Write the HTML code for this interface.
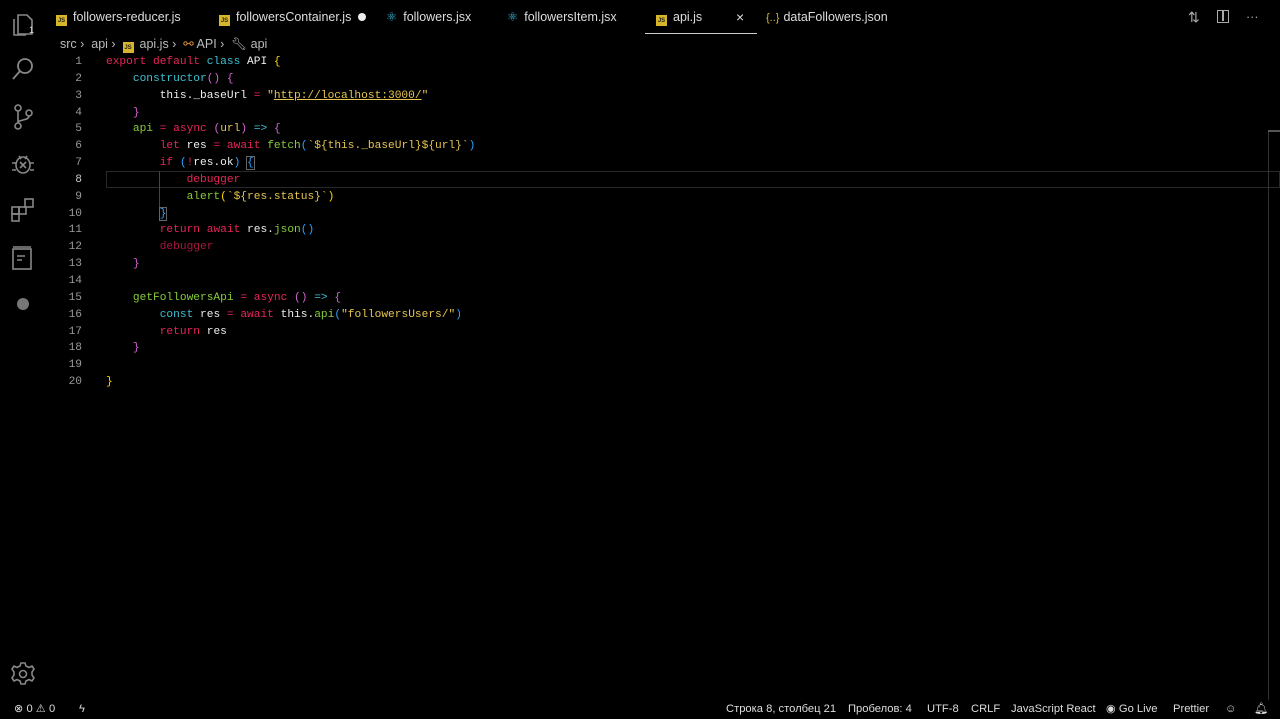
<!DOCTYPE html>
<html><head><meta charset="utf-8"><style>
*{margin:0;padding:0;box-sizing:border-box}
body{width:1280px;height:719px;background:#000;overflow:hidden;position:relative;font-family:"Liberation Sans",sans-serif;color:#ccc}
.act{position:absolute;left:0;top:0;width:45px;height:700px}
.act svg{position:absolute;left:10px}
.tab{position:absolute;top:0;height:34px;line-height:34px;font-size:12.5px;color:#ddd;white-space:nowrap}
.js{display:inline-block;width:11px;height:11px;background:#d8b629;color:#222;font-size:6px;line-height:13px;text-align:center;font-weight:bold;vertical-align:-1px;margin-right:6px}
.bc{position:absolute;top:35px;left:60px;font-size:12.5px;color:#bbb;line-height:18px;white-space:nowrap}
.ln{position:absolute;left:52px;width:30px;text-align:right;font-family:"Liberation Mono",monospace;font-size:11.2px;color:#999}
.code{position:absolute;left:106px;font-family:"Liberation Mono",monospace;font-size:11.2px;color:#eee;white-space:pre}
.k{color:#e8245a}.c{color:#3ec1d3}.g{color:#88cc3a}.s{color:#e6c550}.y{color:#ffd700}.p{color:#d363d3}.b{color:#2aa3ff}.d{color:#a8183f}
.status{position:absolute;top:700px;left:0;width:1280px;height:19px;font-size:11.2px;color:#ddd;line-height:19px}
.status span{position:absolute;white-space:nowrap}
</style></head><body>
<div class="act">
<svg style="top:10px" width="26" height="28" viewBox="0 0 26 28" fill="none" stroke="#888" stroke-width="1.6"><path d="M8 5h9l5 5v14H8z M4 9v16h12"/></svg>
<span style="position:absolute;left:29px;top:25px;font-size:9px;color:#ddd">1</span>
<svg style="top:56px" width="26" height="26" viewBox="0 0 26 26" fill="none" stroke="#888" stroke-width="1.8"><circle cx="15" cy="10" r="7"/><path d="M10 15L3 23"/></svg>
<svg style="top:103px" width="26" height="28" viewBox="0 0 26 28" fill="none" stroke="#888" stroke-width="1.6"><circle cx="8" cy="5" r="3"/><circle cx="8" cy="23" r="3"/><circle cx="19" cy="10" r="3"/><path d="M8 8v12M19 13c0 5-11 3-11 7"/></svg>
<svg style="top:150px" width="26" height="26" viewBox="0 0 26 26" fill="none" stroke="#888" stroke-width="1.6"><ellipse cx="13" cy="15" rx="7" ry="8"/><path d="M9 6l2 3M17 6l-2 3M2 13h4M20 13h4M2 20h4M20 20h4M10 12l6 6M16 12l-6 6"/></svg>
<svg style="top:197px" width="26" height="26" viewBox="0 0 26 26" fill="none" stroke="#888" stroke-width="1.6"><rect x="2" y="10" width="7" height="7"/><rect x="9" y="10" width="7" height="7"/><rect x="2" y="17" width="7" height="7"/><rect x="15" y="2" width="8" height="8"/></svg>
<svg style="top:244px" width="26" height="28" viewBox="0 0 26 28" fill="none" stroke="#888" stroke-width="1.6"><rect x="3" y="5" width="18" height="20"/><path d="M3 3h18M7 12h8M7 16h5"/></svg>
<svg style="top:294px" width="26" height="20" viewBox="0 0 26 20"><circle cx="13" cy="10" r="6" fill="#777"/></svg>
<svg style="top:661px" width="26" height="26" viewBox="0 0 26 26" fill="none" stroke="#888" stroke-width="1.6"><circle cx="13" cy="13" r="3.5"/><path d="M11 2h4l1 3 3 1.5 3-1.5 2 3-2 3v3l2 3-2 3-3-1.5-3 1.5-1 3h-4l-1-3-3-1.5-3 1.5-2-3 2-3v-3l-2-3 2-3 3 1.5 3-1.5z"/></svg>
</div>
<div class="tab" style="left:56px"><span class="js">JS</span>followers-reducer.js</div>
<div class="tab" style="left:219px"><span class="js">JS</span>followersContainer.js <span style="display:inline-block;width:8px;height:8px;border-radius:50%;background:#eee;margin-left:3px"></span></div>
<div class="tab" style="left:386px"><span style="color:#3fc3e8;margin-right:6px">⚛</span>followers.jsx</div>
<div class="tab" style="left:507px"><span style="color:#3fc3e8;margin-right:6px">⚛</span>followersItem.jsx</div>
<div class="tab" style="left:645px;width:112px;padding-left:11px;border-bottom:1px solid #ccc"><span class="js">JS</span>api.js<span style="position:absolute;left:91px;font-size:14px">×</span></div>
<div class="tab" style="left:766px"><span style="color:#d8b629;margin-right:4px;font-size:11px">{..}</span>dataFollowers.json</div>
<div class="tab" style="left:1188px;color:#aaa;font-size:14px">⇅</div>
<div class="tab" style="left:1217px"><span style="display:inline-block;width:12px;height:13px;border:1.5px solid #aaa;vertical-align:-2px;position:relative"><span style="position:absolute;left:4px;top:0;width:1.5px;height:10px;background:#aaa"></span></span></div>
<div class="tab" style="left:1246px;color:#aaa">···</div>
<div class="bc">src ›&nbsp; api ›&nbsp; <span class="js">JS</span>api.js ›&nbsp; <span style="color:#e09040">⚯</span> API ›&nbsp; <span style="color:#bbb">🔧︎</span> api</div>
<div style="position:absolute;left:106px;top:171px;width:1174px;height:17px;border:1px solid #282828"></div>
<div style="position:absolute;left:159px;top:171px;width:1px;height:50px;background:#444"></div>
<div style="position:absolute;left:1268px;top:130px;width:1px;height:570px;background:#333"></div>
<div style="position:absolute;left:1268px;top:130px;width:12px;height:2px;background:#555"></div>
<div class="ln" style="top:54px;line-height:16.84px">1<br>2<br>3<br>4<br>5<br>6<br>7<br><span style="color:#ccc">8</span><br>9<br>10<br>11<br>12<br>13<br>14<br>15<br>16<br>17<br>18<br>19<br>20</div>
<div class="code" style="top:54px;line-height:16.84px"><span class="k">export default</span> <span class="c">class</span> API <span class="y">{</span>
    <span class="c">constructor</span><span class="p">()</span> <span class="p">{</span>
        this._baseUrl <span class="k">=</span> <span class="s">"<u>http://localhost:3000/</u>"</span>
    <span class="p">}</span>
    <span class="g">api</span> <span class="k">=</span> <span class="k">async</span> <span class="p">(</span><span class="s">url</span><span class="p">)</span> <span class="c">=&gt;</span> <span class="p">{</span>
        <span class="k">let</span> res <span class="k">=</span> <span class="k">await</span> <span class="g">fetch</span><span class="b">(</span><span class="s">`${this._baseUrl}${url}`</span><span class="b">)</span>
        <span class="k">if</span> <span class="b">(</span><span class="k">!</span>res.ok<span class="b">)</span> <span class="b" style="outline:1px solid #666">{</span>
            <span class="k">debugger</span>
            <span class="g">alert</span><span class="y">(</span><span class="s">`${res.status}`</span><span class="y">)</span>
        <span class="b" style="outline:1px solid #666">}</span>
        <span class="k">return</span> <span class="k">await</span> res.<span class="g">json</span><span class="b">()</span>
        <span class="d">debugger</span>
    <span class="p">}</span>

    <span class="g">getFollowersApi</span> <span class="k">=</span> <span class="k">async</span> <span class="p">()</span> <span class="c">=&gt;</span> <span class="p">{</span>
        <span class="c">const</span> res <span class="k">=</span> <span class="k">await</span> this.<span class="g">api</span><span class="b">(</span><span class="s">"followersUsers/"</span><span class="b">)</span>
        <span class="k">return</span> res
    <span class="p">}</span>

<span class="y">}</span></div>
<div class="status">
<span style="left:14px">⊗ 0 ⚠ 0</span><span style="left:79px">ϟ</span>
<span style="left:726px">Строка 8, столбец 21</span>
<span style="left:848px">Пробелов: 4</span>
<span style="left:927px">UTF-8</span>
<span style="left:971px">CRLF</span>
<span style="left:1011px">JavaScript React</span>
<span style="left:1106px">◉ Go Live</span>
<span style="left:1173px">Prettier</span>
<span style="left:1225px">☺</span>
<span style="left:1254px">🔔︎</span>
</div>
</body></html>
